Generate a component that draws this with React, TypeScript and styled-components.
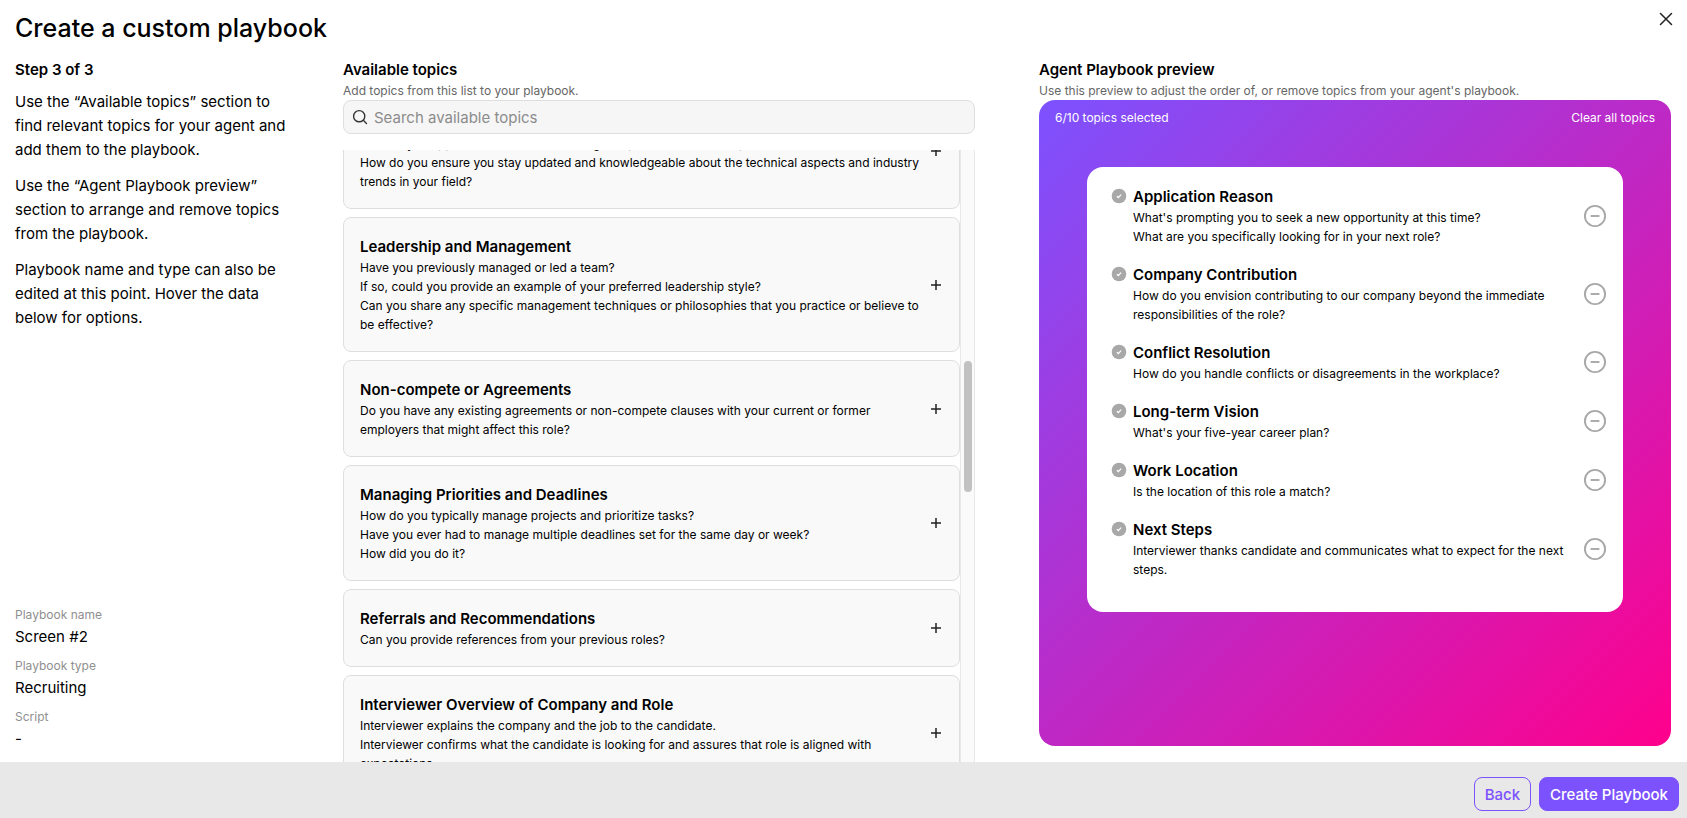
import React, { useLayoutEffect, useRef } from "react";
import styled, { createGlobalStyle } from "styled-components";

const GlobalStyle = createGlobalStyle`
  *, *::before, *::after { box-sizing: border-box; }
  body {
    margin: 0;
    background: #fff;
    color: #000;
    font-family: Inter, "Liberation Sans", sans-serif;
    font-size: 15px;
    line-height: 24px;
  }
  h1, h2, h3, p, ul, dl, dd { margin: 0; padding: 0; }
  ul { list-style: none; }
  button, input { font: inherit; color: inherit; }
`;

const Page = styled.div`
  display: flex;
  flex-direction: column;
  height: 100vh;
`;

const Header = styled.header`
  display: flex;
  justify-content: space-between;
  align-items: flex-start;
  padding: 9px 11px 11px 15px;
`;

const Title = styled.h1`
  font-size: 25px;
  line-height: 38px;
  font-weight: 500;
`;

const IconButton = styled.button`
  display: flex;
  flex: none;
  align-items: center;
  justify-content: center;
  padding: 0;
  border: 0;
  background: none;
  color: ${(p) => p.color || "#222"};
  cursor: pointer;
`;

const Columns = styled.main`
  flex: 1;
  min-height: 0;
  display: grid;
  grid-template-columns: 328px minmax(0, 1fr) 64px minmax(0, 1fr);
  padding: 0 16px 0 15px;
`;

const Column = styled.section`
  display: flex;
  flex-direction: column;
  min-height: 0;
`;

const GuideColumn = styled(Column)`
  padding: 0 52px 11px 0;
`;

const PreviewColumn = styled(Column)`
  grid-column: 4;
  padding-bottom: 16px;
`;

const SectionTitle = styled.h2`
  font-size: 15px;
  line-height: 24px;
  font-weight: 600;
`;

const SectionHint = styled.p`
  font-size: 12px;
  line-height: 18px;
  color: #666;
`;

const Instructions = styled.div`
  display: flex;
  flex-direction: column;
  gap: 12px;
  padding-top: 8px;
`;

const Details = styled.dl`
  display: flex;
  flex-direction: column;
  gap: 7px;
  margin-top: auto;
`;

const DetailLabel = styled.dt`
  margin-bottom: 1px;
  font-size: 12px;
  line-height: 19px;
  color: #8f8f8f;
`;

const SearchBox = styled.label`
  display: flex;
  flex: none;
  align-items: center;
  gap: 6px;
  height: 34px;
  padding: 0 8px;
  border: 1px solid #dedede;
  border-radius: 8px;
  background: #f6f6f6;
  color: #333;
`;

const SearchInput = styled.input`
  flex: 1;
  min-width: 0;
  height: 100%;
  padding: 1px 0 0;
  border: 0;
  outline: 0;
  background: none;
  color: #000;
  &::placeholder { color: #8c8c8c; opacity: 1; }
`;

const ListFrame = styled.div`
  flex: 1;
  min-height: 0;
  display: flex;
  margin-top: 16px;
`;

const TopicList = styled.ul`
  flex: 1;
  min-width: 0;
  display: flex;
  flex-direction: column;
  gap: 8px;
  overflow-y: auto;
  scrollbar-width: none;
`;

const TopicCard = styled.li`
  display: flex;
  flex: none;
  align-items: center;
  padding: 17px 15px 17px 16px;
  border: 1px solid #dedede;
  border-radius: 8px;
  background: #f9f9f9;
`;

const TopicBody = styled.div`
  flex: 1;
  min-width: 0;
  padding-right: 6px;
`;

const TopicTitle = styled.h3`
  font-size: 15px;
  line-height: 23px;
  font-weight: 600;
`;

const Question = styled.p`
  font-size: 12px;
  line-height: 19px;
`;

const ScrollTrack = styled.div`
  display: flex;
  flex-direction: column;
  align-items: center;
  width: 15px;
  border: solid #e8e8e8;
  border-width: 0 1px;
  background: #fafafa;
`;

const ScrollSpace = styled.div<{ $share: number }>`
  flex: ${(p) => p.$share} 0 0;
`;

const ScrollThumb = styled(ScrollSpace)`
  width: 8px;
  border-radius: 4px;
  background: #c1c1c1;
`;

const Preview = styled.div`
  flex: 1;
  min-height: 0;
  padding: 8px 16px;
  border-radius: 16px;
  background: linear-gradient(135deg, #7c52ff 0%, #ff008c 100%);
`;

const PreviewBar = styled.div`
  display: flex;
  justify-content: space-between;
  font-size: 12px;
  line-height: 19px;
  color: #fff;
`;

const ClearButton = styled.button`
  padding: 0;
  border: 0;
  background: none;
  cursor: pointer;
`;

const SelectedList = styled.ul`
  display: flex;
  flex-direction: column;
  gap: 17px;
  margin: 40px 32px 0;
  padding: 18px 16px 33px 24px;
  border-radius: 16px;
  background: #fff;
`;

const SelectedRow = styled.li`
  display: flex;
  align-items: flex-start;
  gap: 6px;
`;

const CheckSlot = styled.span`
  display: flex;
  flex: none;
  align-items: center;
  height: 22px;
`;

const RemoveButton = styled(IconButton)`
  align-self: center;
`;

const Footer = styled.footer`
  display: flex;
  flex: none;
  justify-content: flex-end;
  gap: 8px;
  padding: 15px 8px 7px;
  background: #e8e8e8;
`;

const ActionButton = styled.button<{ $primary?: boolean }>`
  height: 34px;
  padding: 1px 10px 0;
  border: 1px solid #7c52ff;
  border-radius: 8px;
  background: ${(p) => (p.$primary ? "#7c52ff" : "transparent")};
  color: ${(p) => (p.$primary ? "#fff" : "#7c52ff")};
  font-weight: 500;
  cursor: pointer;
`;

const CloseIcon = () => (
  <svg width="20" height="20" viewBox="0 0 20 20" fill="none" stroke="currentColor" strokeWidth="1.5" strokeLinecap="round">
    <path d="M4.5 4.5l11 11M15.5 4.5l-11 11" />
  </svg>
);

const SearchIcon = () => (
  <svg width="16" height="16" viewBox="0 0 16 16" fill="none" stroke="currentColor" strokeWidth="1.4" strokeLinecap="round">
    <circle cx="7.2" cy="7.2" r="5.6" />
    <path d="M11.3 11.3l3.2 3.2" />
  </svg>
);

const PlusIcon = () => (
  <svg width="16" height="16" viewBox="0 0 16 16" fill="none" stroke="currentColor" strokeWidth="1.5">
    <path d="M8 3v10M3 8h10" />
  </svg>
);

const CheckIcon = () => (
  <svg width="16" height="16" viewBox="0 0 16 16" fill="none">
    <circle cx="8" cy="8" r="7.3" fill="#a8a8a8" />
    <path d="M5.9 8.3l1.4 1.3 2.8-3" stroke="#fff" strokeWidth="1.3" />
  </svg>
);

const MinusIcon = () => (
  <svg width="24" height="24" viewBox="0 0 24 24" fill="none" stroke="currentColor" strokeWidth="1.9">
    <circle cx="12" cy="12" r="10.1" />
    <path d="M7.6 12h8.8" />
  </svg>
);

type Topic = { title: string; questions: string[] };

const available: Topic[] = [
  {
    title: "Learning and Development",
    questions: [
      "How do you approach continuous learning and professional development?",
      "How do you ensure you stay updated and knowledgeable about the technical aspects and industry trends in your field?",
    ],
  },
  {
    title: "Leadership and Management",
    questions: [
      "Have you previously managed or led a team?",
      "If so, could you provide an example of your preferred leadership style?",
      "Can you share any specific management techniques or philosophies that you practice or believe to be effective?",
    ],
  },
  {
    title: "Non-compete or Agreements",
    questions: [
      "Do you have any existing agreements or non-compete clauses with your current or former employers that might affect this role?",
    ],
  },
  {
    title: "Managing Priorities and Deadlines",
    questions: [
      "How do you typically manage projects and prioritize tasks?",
      "Have you ever had to manage multiple deadlines set for the same day or week?",
      "How did you do it?",
    ],
  },
  {
    title: "Referrals and Recommendations",
    questions: ["Can you provide references from your previous roles?"],
  },
  {
    title: "Interviewer Overview of Company and Role",
    questions: [
      "Interviewer explains the company and the job to the candidate.",
      "Interviewer confirms what the candidate is looking for and assures that role is aligned with expectations.",
    ],
  },
];

const selected: Topic[] = [
  {
    title: "Application Reason",
    questions: [
      "What's prompting you to seek a new opportunity at this time?",
      "What are you specifically looking for in your next role?",
    ],
  },
  {
    title: "Company Contribution",
    questions: [
      "How do you envision contributing to our company beyond the immediate responsibilities of the role?",
    ],
  },
  {
    title: "Conflict Resolution",
    questions: ["How do you handle conflicts or disagreements in the workplace?"],
  },
  { title: "Long-term Vision", questions: ["What's your five-year career plan?"] },
  { title: "Work Location", questions: ["Is the location of this role a match?"] },
  {
    title: "Next Steps",
    questions: ["Interviewer thanks candidate and communicates what to expect for the next steps."],
  },
];

const details = [
  { label: "Playbook name", value: "Screen #2" },
  { label: "Playbook type", value: "Recruiting" },
  { label: "Script", value: "-" },
];

const INITIAL_SCROLL = 57;

const TopicText = ({ topic }: { topic: Topic }) => (
  <TopicBody>
    <TopicTitle>{topic.title}</TopicTitle>
    {topic.questions.map((q) => (
      <Question key={q}>{q}</Question>
    ))}
  </TopicBody>
);

export default function App() {
  const listRef = useRef<HTMLUListElement>(null);

  useLayoutEffect(() => {
    if (listRef.current) listRef.current.scrollTop = INITIAL_SCROLL;
  }, []);

  return (
    <>
      <GlobalStyle />
      <Page>
        <Header>
          <Title>Create a custom playbook</Title>
          <IconButton type="button" aria-label="Close">
            <CloseIcon />
          </IconButton>
        </Header>
        <Columns>
          <GuideColumn>
            <SectionTitle>Step 3 of 3</SectionTitle>
            <Instructions>
              <p>Use the “Available topics” section to find relevant topics for your agent and add them to the playbook.</p>
              <p>Use the “Agent Playbook preview” section to arrange and remove topics from the playbook.</p>
              <p>Playbook name and type can also be edited at this point. Hover the data below for options.</p>
            </Instructions>
            <Details>
              {details.map((d) => (
                <div key={d.label}>
                  <DetailLabel>{d.label}</DetailLabel>
                  <dd>{d.value}</dd>
                </div>
              ))}
            </Details>
          </GuideColumn>

          <Column>
            <SectionTitle>Available topics</SectionTitle>
            <SectionHint>Add topics from this list to your playbook.</SectionHint>
            <SearchBox>
              <SearchIcon />
              <SearchInput type="text" aria-label="Search available topics" placeholder="Search available topics" />
            </SearchBox>
            <ListFrame>
              <TopicList ref={listRef}>
                {available.map((t) => (
                  <TopicCard key={t.title}>
                    <TopicText topic={t} />
                    <IconButton type="button" aria-label={`Add ${t.title}`}>
                      <PlusIcon />
                    </IconButton>
                  </TopicCard>
                ))}
              </TopicList>
              <ScrollTrack aria-hidden="true">
                <ScrollSpace $share={211} />
                <ScrollThumb $share={131} />
                <ScrollSpace $share={270} />
              </ScrollTrack>
            </ListFrame>
          </Column>

          <PreviewColumn>
            <SectionTitle>Agent Playbook preview</SectionTitle>
            <SectionHint>Use this preview to adjust the order of, or remove topics from your agent's playbook.</SectionHint>
            <Preview>
              <PreviewBar>
                <span>6/10 topics selected</span>
                <ClearButton type="button">Clear all topics</ClearButton>
              </PreviewBar>
              <SelectedList>
                {selected.map((t) => (
                  <SelectedRow key={t.title}>
                    <CheckSlot>
                      <CheckIcon />
                    </CheckSlot>
                    <TopicText topic={t} />
                    <RemoveButton type="button" color="#a8a8a8" aria-label={`Remove ${t.title}`}>
                      <MinusIcon />
                    </RemoveButton>
                  </SelectedRow>
                ))}
              </SelectedList>
            </Preview>
          </PreviewColumn>
        </Columns>
        <Footer>
          <ActionButton type="button">Back</ActionButton>
          <ActionButton type="button" $primary>
            Create Playbook
          </ActionButton>
        </Footer>
      </Page>
    </>
  );
}
